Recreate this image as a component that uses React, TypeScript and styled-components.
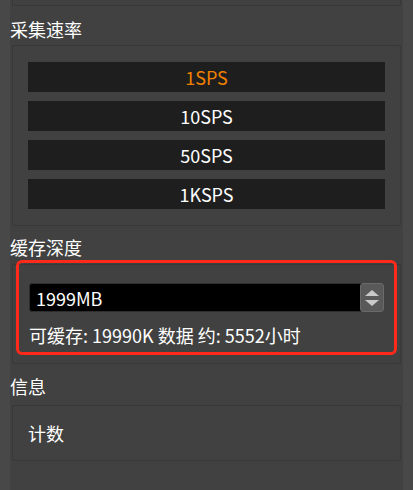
import React from "react";
import styled, { createGlobalStyle } from "styled-components";

const Global = createGlobalStyle`
  html, body { margin: 0; padding: 0; background: #484848; }
  body { font-family: "Noto Sans CJK SC", "Noto Sans", sans-serif; color: #ffffff; }
`;

const Page = styled.div`
  display: flex;
  justify-content: center;
  padding: 0 10px;
  height: 490px;
  overflow: hidden;
  background: #484848;
`;

const Column = styled.div`
  flex: 1;
  background: #414141;
  display: flex;
  flex-direction: column;
`;

const TopStub = styled.div`
  height: 5px;
  margin: 0 2px;
  border: 1px solid #383838;
  border-top: none;
`;

const Title = styled.div<{ $pt: number; $pb: number }>`
  font-size: 18px;
  line-height: 24px;
  padding-top: ${(p) => p.$pt}px;
  padding-bottom: ${(p) => p.$pb}px;
  color: #ffffff;
`;

const GroupBox = styled.div<{ $pad: string }>`
  position: relative;
  margin: 0 2px;
  border: 1px solid #383838;
  border-radius: 2px;
  padding: ${(p) => p.$pad};
  display: flex;
  flex-direction: column;
`;

const RateList = styled.div`
  display: flex;
  flex-direction: column;
  gap: 9px;
`;

const RateButton = styled.div<{ $active?: boolean }>`
  height: 30px;
  background: #1e1e1e;
  display: flex;
  align-items: center;
  justify-content: center;
  font-size: 18px;
  color: ${(p) => (p.$active ? "#f08000" : "#ffffff")};
`;

const SpinBox = styled.div`
  display: flex;
  height: 29px;
  background: #000000;
  border: 1px solid #2e2e2e;
  border-radius: 3px;
  box-sizing: border-box;
`;

const SpinText = styled.div`
  flex: 1;
  display: flex;
  align-items: center;
  padding-left: 6px;
  font-size: 18px;
  color: #ffffff;
`;

const SpinButtons = styled.div`
  width: 22px;
  margin: -1px -1px -1px 0;
  background: #595959;
  border: 1px solid #6a6a6a;
  border-radius: 3px;
  display: flex;
  flex-direction: column;
  align-items: center;
  justify-content: center;
  gap: 4px;
`;

const Arrow = styled.div<{ $up?: boolean }>`
  width: 0;
  height: 0;
  border-left: 7px solid transparent;
  border-right: 7px solid transparent;
  ${(p) =>
    p.$up
      ? "border-bottom: 6px solid #c9c9c9;"
      : "border-top: 6px solid #c9c9c9;"}
`;

const InfoLine = styled.div`
  margin-top: 11px;
  font-size: 18px;
  line-height: 24px;
  color: #ffffff;
`;

const Highlight = styled.div`
  position: absolute;
  top: -5px;
  left: 3px;
  right: 3px;
  height: 95px;
  border: 3px solid #ff2a1a;
  border-radius: 6px;
  box-sizing: border-box;
  pointer-events: none;
`;

const Counter = styled.div`
  font-size: 18px;
  line-height: 24px;
  color: #ffffff;
`;

export default function App() {
  const rates = ["1SPS", "10SPS", "50SPS", "1KSPS"];
  return (
    <>
      <Global />
      <Page>
        <Column>
          <TopStub />
          <Title $pt={11} $pb={4}>采集速率</Title>
          <GroupBox $pad="16px 15px 16px 15px">
            <RateList>
              {rates.map((r, i) => (
                <RateButton key={r} $active={i === 0}>
                  {r}
                </RateButton>
              ))}
            </RateList>
          </GroupBox>
          <Title $pt={9} $pb={5}>缓存深度</Title>
          <GroupBox $pad="18px 16px 16px 16px">
            <SpinBox>
              <SpinText>1999MB</SpinText>
              <SpinButtons>
                <Arrow $up />
                <Arrow />
              </SpinButtons>
            </SpinBox>
            <InfoLine>可缓存: 19990K 数据 约: 5552小时</InfoLine>
            <Highlight />
          </GroupBox>
          <Title $pt={10} $pb={7}>信息</Title>
          <GroupBox $pad="15px 15px 15px 15px">
            <Counter>计数</Counter>
          </GroupBox>
        </Column>
      </Page>
    </>
  );
}
